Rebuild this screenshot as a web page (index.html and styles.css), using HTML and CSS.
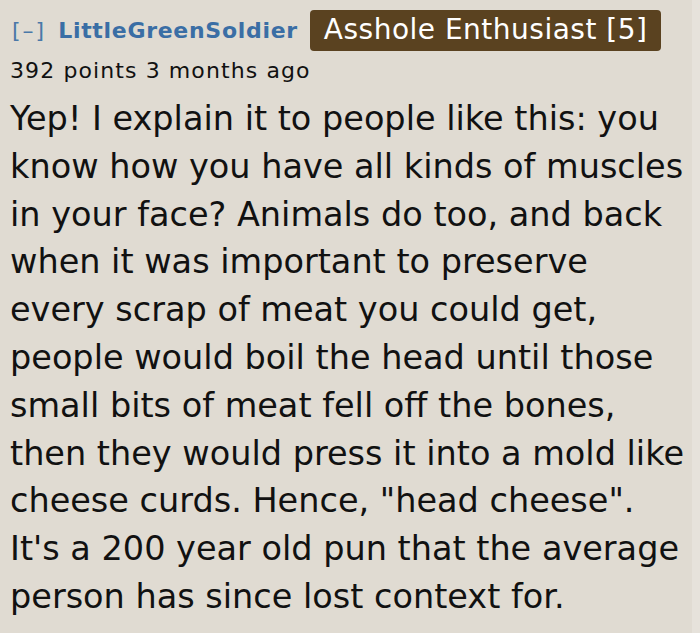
FILE: index.html
```html
<!DOCTYPE html>
<html>
<head>
<meta charset="utf-8">
<link rel="stylesheet" href="styles.css">
</head>
<body>
<div class="comment">
  <div class="tagline">
    <span class="toggle">[–]</span>
    <span class="author">LittleGreenSoldier</span>
    <span class="flair">Asshole Enthusiast [5]</span>
  </div>
  <div class="meta">392 points 3 months ago</div>
  <p class="body">Yep! I explain it to people like this: you know how you have all kinds of muscles in your face? Animals do too, and back when it was important to preserve every scrap of meat you could get, people would boil the head until those small bits of meat fell off the bones, then they would press it into a mold like cheese curds. Hence, "head cheese". It's a 200 year old pun that the average person has since lost context for.</p>
</div>
</body>
</html>
```
FILE: styles.css
```css
html, body {
  margin: 0;
  padding: 0;
  background: #e6e2db;
}
body {
  font-family: "DejaVu Sans", Verdana, sans-serif;
  color: #111;
  width: 700px;
  height: 633px;
  overflow: hidden;
}
.comment {
  width: 682px;
  height: 624px;
  padding: 9px 0 0 10px;
  background: #e0dbd2;
}
.tagline {
  display: flex;
  align-items: center;
  height: 42px;
}
.toggle {
  color: #4a78a8;
  font-size: 22px;
  margin-left: 2px;
  letter-spacing: 2px;
}
.author {
  color: #3a6ea5;
  font-weight: bold;
  font-size: 22px;
  letter-spacing: 0.7px;
  margin-left: 12px;
}
.flair {
  background: #5a4220;
  color: #fff;
  font-size: 28px;
  letter-spacing: 0.5px;
  border-radius: 4px;
  padding: 3px 13px 5px 14px;
  margin-left: 12px;
}
.meta {
  font-size: 22px;
  letter-spacing: 1.1px;
  margin-top: 7px;
  color: #111;
}
.body {
  margin: 12px 0 0 0;
  font-size: 33.5px;
  line-height: 47.8px;
  width: 680px;
}
```
